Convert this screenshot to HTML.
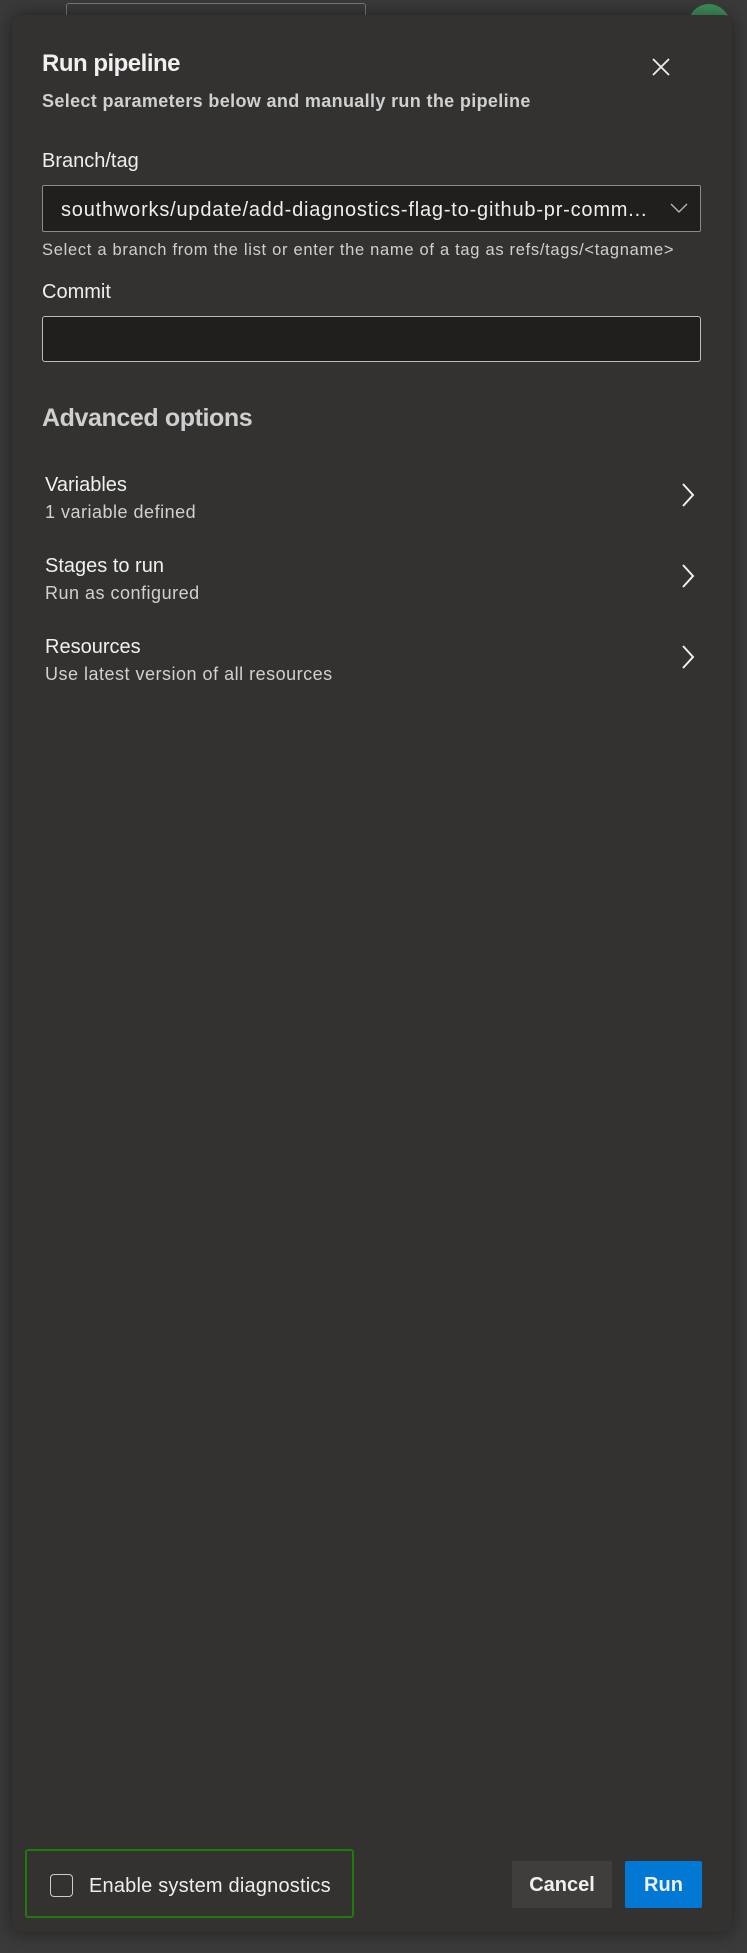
<!DOCTYPE html>
<html><head><meta charset="utf-8"><style>
html,body{margin:0;padding:0}
body{width:747px;height:1953px;background:#3a3a3a;position:relative;overflow:hidden;font-family:"Liberation Sans",sans-serif;color:#f0f0f0}
.hdr{position:absolute;left:0;top:0;width:747px;height:90px;background:#3a3a3a}
.topbox{position:absolute;left:66px;top:3px;width:298px;height:40px;border:1px solid #777;border-radius:3px;background:#3a3a3a}
.avatar{position:absolute;left:688px;top:4px;width:42px;height:42px;border-radius:50%;background:#3f8f5a}
.dlg{position:absolute;left:12px;top:15px;width:720px;height:1917px;background:#333231;border-radius:8px;box-shadow:0 0 18px rgba(0,0,0,.45)}
.a{position:absolute;white-space:nowrap}
.box{position:absolute;left:42px;width:657px;border:1px solid #8a8a8a;border-radius:2px;background:#201f1e}
.sub{font-size:18px;color:#d0d0d0;letter-spacing:0.5px}
</style></head><body>
<div class="hdr"></div>
<div class="topbox"></div>
<div class="avatar"></div>
<div class="dlg"></div>
<div class="a" style="left:42px;top:50px;font-size:24px;font-weight:bold;letter-spacing:-0.5px">Run pipeline</div>
<svg class="a" style="left:651px;top:57px" width="20" height="20" viewBox="0 0 20 20"><path d="M2 2L18 18M18 2L2 18" stroke="#eee" stroke-width="1.8"/></svg>
<div class="a" style="left:42px;top:91px;font-size:18px;font-weight:bold;color:#d0d0d0;letter-spacing:0.35px">Select parameters below and manually run the pipeline</div>
<div class="a" style="left:42px;top:150px;font-size:20px;color:#eee">Branch/tag</div>
<div class="box" style="top:185px;height:45px"></div>
<div class="a" style="left:61px;top:199px;font-size:20px;color:#eee;letter-spacing:0.8px">southworks/update/add-diagnostics-flag-to-github-pr-comm...</div>
<svg class="a" style="left:670px;top:202px" width="18" height="12" viewBox="0 0 18 12"><path d="M1 2L9 10L17 2" stroke="#bbb" stroke-width="1.3" fill="none"/></svg>
<div class="a" style="left:42px;top:241px;font-size:16.5px;color:#cfcfcf;letter-spacing:0.7px">Select a branch from the list or enter the name of a tag as refs/tags/&lt;tagname&gt;</div>
<div class="a" style="left:42px;top:281px;font-size:20px;color:#eee">Commit</div>
<div class="box" style="top:316px;height:44px;border-color:#bbb;border-radius:3px"></div>
<div class="a" style="left:42px;top:404px;font-size:25px;font-weight:bold;color:#cfcfcf;letter-spacing:-0.4px">Advanced options</div>

<div class="a" style="left:45px;top:474px;font-size:20px">Variables</div>
<div class="a sub" style="left:45px;top:502px">1 variable defined</div>
<svg class="a" style="left:680px;top:482px" width="16" height="26" viewBox="0 0 16 26"><path d="M3 2L13 13L3 24" stroke="#eee" stroke-width="2" fill="none"/></svg>

<div class="a" style="left:45px;top:555px;font-size:20px">Stages to run</div>
<div class="a sub" style="left:45px;top:583px">Run as configured</div>
<svg class="a" style="left:680px;top:563px" width="16" height="26" viewBox="0 0 16 26"><path d="M3 2L13 13L3 24" stroke="#eee" stroke-width="2" fill="none"/></svg>

<div class="a" style="left:45px;top:636px;font-size:20px">Resources</div>
<div class="a sub" style="left:45px;top:664px">Use latest version of all resources</div>
<svg class="a" style="left:680px;top:644px" width="16" height="26" viewBox="0 0 16 26"><path d="M3 2L13 13L3 24" stroke="#eee" stroke-width="2" fill="none"/></svg>

<div class="a" style="left:25px;top:1849px;width:325px;height:65px;border:2.5px solid #1e7a0c;border-radius:3px"></div>
<div class="a" style="left:50px;top:1874px;width:21px;height:21px;border:1px solid #ccc;border-radius:4px"></div>
<div class="a" style="left:89px;top:1875px;font-size:20px;color:#eee;letter-spacing:0.2px">Enable system diagnostics</div>
<div class="a" style="left:512px;top:1861px;width:100px;height:47px;background:#3f3e3d;border-radius:2px;text-align:center;line-height:49px;font-size:20px;font-weight:bold">Cancel</div>
<div class="a" style="left:625px;top:1861px;width:77px;height:47px;background:#0078d4;border-radius:2px;text-align:center;line-height:49px;font-size:20px;font-weight:bold">Run</div>
</body></html>
